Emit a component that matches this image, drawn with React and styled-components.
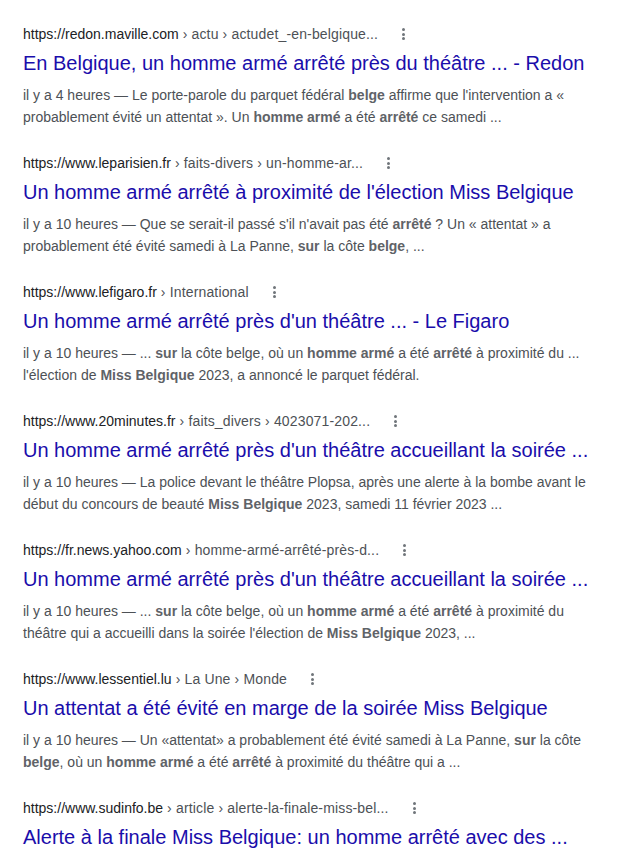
import React from 'react';
import styled, { createGlobalStyle } from 'styled-components';

const GlobalStyle = createGlobalStyle`
  body {
    margin: 0;
    background: #fff;
    font-family: "Liberation Sans", Arial, sans-serif;
  }
`;

const Page = styled.div`
  padding: 24px 0 0 23px;
  width: 585px;
  display: flex;
  flex-direction: column;
  gap: 25px;
`;

const Result = styled.div`
  display: flex;
  flex-direction: column;
`;

const UrlRow = styled.div`
  display: flex;
  align-items: center;
  height: 20px;
  font-size: 14px;
  line-height: 20px;
  white-space: nowrap;
`;

const UrlText = styled.cite`
  font-style: normal;
  color: #202124;

  span {
    color: #4d5156;
    letter-spacing: 0.15px;
  }
`;

const MoreButton = styled.span`
  display: flex;
  flex-direction: column;
  align-items: center;
  gap: 1.5px;
  margin-left: 24px;
  width: 3px;

  i {
    display: block;
    width: 3px;
    height: 3px;
    border-radius: 50%;
    background: #70757a;
  }
`;

const Title = styled.a`
  display: block;
  margin-top: 6px;
  font-size: 20px;
  line-height: 26px;
  color: #1a0dab;
  text-decoration: none;
  white-space: nowrap;
`;

const Snippet = styled.div`
  margin-top: 8px;
  font-size: 14px;
  line-height: 22px;
  color: #4d5156;

  b {
    color: #5f6368;
    font-weight: bold;
  }
`;

const results = [
  {
    site: 'https://redon.maville.com',
    crumbs: ' › actu › actudet_-en-belgique...',
    title: 'En Belgique, un homme armé arrêté près du théâtre ... - Redon',
    snippet: (
      <>il y a 4 heures — Le porte-parole du parquet fédéral <b>belge</b> affirme que l'intervention a « probablement évité un attentat ». Un <b>homme armé</b> a été <b>arrêté</b> ce samedi ...</>
    ),
  },
  {
    site: 'https://www.leparisien.fr',
    crumbs: ' › faits-divers › un-homme-ar...',
    title: "Un homme armé arrêté à proximité de l'élection Miss Belgique",
    snippet: (
      <>il y a 10 heures — Que se serait-il passé s'il n'avait pas été <b>arrêté</b> ? Un « attentat » a probablement été évité samedi à La Panne, <b>sur</b> la côte <b>belge</b>, ...</>
    ),
  },
  {
    site: 'https://www.lefigaro.fr',
    crumbs: ' › International',
    title: "Un homme armé arrêté près d'un théâtre ... - Le Figaro",
    snippet: (
      <>il y a 10 heures — ... <b>sur</b> la côte belge, où un <b>homme armé</b> a été <b>arrêté</b> à proximité du ... l'élection de <b>Miss Belgique</b> 2023, a annoncé le parquet fédéral.</>
    ),
  },
  {
    site: 'https://www.20minutes.fr',
    crumbs: ' › faits_divers › 4023071-202...',
    title: "Un homme armé arrêté près d'un théâtre accueillant la soirée ...",
    snippet: (
      <>il y a 10 heures — La police devant le théâtre Plopsa, après une alerte à la bombe avant le début du concours de beauté <b>Miss Belgique</b> 2023, samedi 11 février 2023 ...</>
    ),
  },
  {
    site: 'https://fr.news.yahoo.com',
    crumbs: ' › homme-armé-arrêté-près-d...',
    title: "Un homme armé arrêté près d'un théâtre accueillant la soirée ...",
    snippet: (
      <>il y a 10 heures — ... <b>sur</b> la côte belge, où un <b>homme armé</b> a été <b>arrêté</b> à proximité du théâtre qui a accueilli dans la soirée l'élection de <b>Miss Belgique</b> 2023, ...</>
    ),
  },
  {
    site: 'https://www.lessentiel.lu',
    crumbs: ' › La Une › Monde',
    title: 'Un attentat a été évité en marge de la soirée Miss Belgique',
    snippet: (
      <>il y a 10 heures — Un «attentat» a probablement été évité samedi à La Panne, <b>sur</b> la côte <b>belge</b>, où un <b>homme armé</b> a été <b>arrêté</b> à proximité du théâtre qui a ...</>
    ),
  },
  {
    site: 'https://www.sudinfo.be',
    crumbs: ' › article › alerte-la-finale-miss-bel...',
    title: 'Alerte à la finale Miss Belgique: un homme arrêté avec des ...',
    snippet: null,
  },
];

const App = () => (
  <>
    <GlobalStyle />
    <Page>
      {results.map((r) => (
        <Result key={r.site}>
          <UrlRow>
            <UrlText>{r.site}<span>{r.crumbs}</span></UrlText>
            <MoreButton><i /><i /><i /></MoreButton>
          </UrlRow>
          <Title href="#">{r.title}</Title>
          {r.snippet && <Snippet>{r.snippet}</Snippet>}
        </Result>
      ))}
    </Page>
  </>
);

export default App;
